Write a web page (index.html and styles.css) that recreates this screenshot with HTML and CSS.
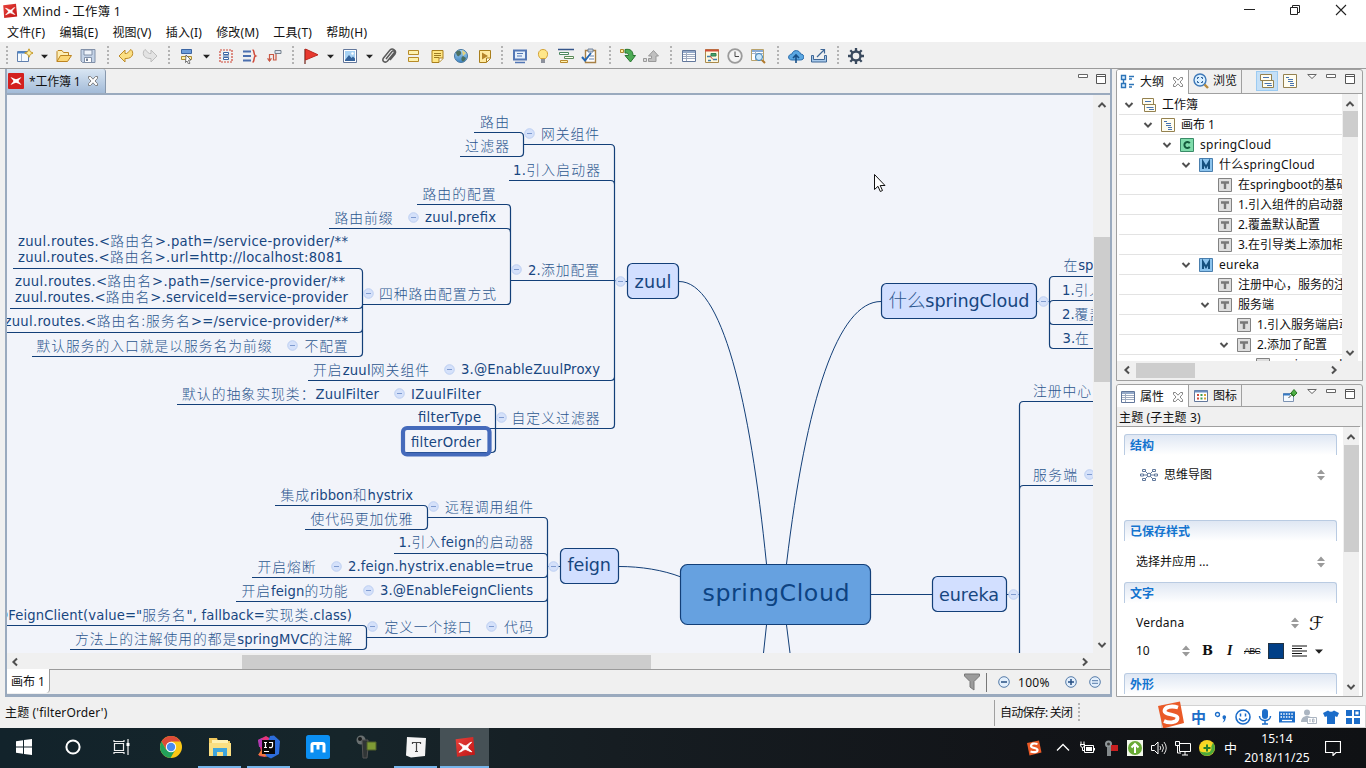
FILE: index.html
```html
<!DOCTYPE html>
<html lang="zh-CN">
<head>
<meta charset="utf-8">
<title>XMind - 工作簿 1</title>
<link rel="stylesheet" href="styles.css">
</head>
<body>
<svg class="defs" width="0" height="0">
  <defs>
    <linearGradient id="red" x1="0" y1="0" x2="1" y2="1"><stop offset="0" stop-color="#e8423c"/><stop offset="1" stop-color="#c01413"/></linearGradient>
    <linearGradient id="blue" x1="0" y1="0" x2="0" y2="1"><stop offset="0" stop-color="#a9d6f5"/><stop offset="1" stop-color="#3f86c4"/></linearGradient>
    <symbol id="xmind" viewBox="0 0 16 16"><path d="M1.200 2.300 14 .8l1.200 12.800-13 1.500z" fill="url(#red)"/><path d="M3.500 5.200c2 .2 2.800 1.500 4.800 1.900 1.700-.2 2.500-2.300 4.500-2.600-1 1.500-2.500 2.300-2.800 3.700.5 1.400 2 2 3 3.300-2-.1-3-1.500-4.900-1.700-1.600.3-2.500 1.700-4.400 2 1-1.500 2.400-2 2.700-3.300-.4-1.400-1.900-2-2.900-3.300z" fill="#fff" stroke="#fff" stroke-width=".6"/></symbol>
    <symbol id="xsq" viewBox="0 0 16 16"><rect width="16" height="16" rx="1" fill="#d3201f"/><path d="M2.500 4.200c2 .2 3.500 1.600 5.500 2 2-.4 3.500-1.800 5.500-2-1 1.700-2.600 2.400-2.900 3.800.3 1.400 1.900 2.100 2.900 3.800-2-.2-3.500-1.600-5.500-2-2 .4-3.500 1.800-5.500 2 1-1.700 2.600-2.400 2.900-3.800-.3-1.400-1.900-2.100-2.900-3.800z" fill="#fff"/></symbol>
    <symbol id="close" viewBox="0 0 12 12"><path d="M1.500 1.500h2L6 4.200l2.500-2.700h2v1.800L8 6l2.500 2.700v1.800h-2L6 7.800l-2.500 2.700h-2V8.700L4 6 1.500 3.300z" fill="#fff" stroke="#777" stroke-width=".9"/></symbol>
    <symbol id="min" viewBox="0 0 10 12"><path d="M.5 1.500h9v3h-9z" fill="#fff" stroke="#666"/></symbol>
    <symbol id="max" viewBox="0 0 10 12"><path d="M.5 1.500h9v9h-9zM.5 3.500h9" fill="#fff" stroke="#555"/></symbol>
    <symbol id="menu" viewBox="0 0 10 12"><path d="M.7 1.500h8.600L5 5.500z" fill="#fff" stroke="#666"/></symbol>
    <symbol id="up" viewBox="0 0 10 10"><path d="M1.500 7 5 3.400 8.500 7" fill="none" stroke="#505050" stroke-width="2"/></symbol>
    <symbol id="down" viewBox="0 0 10 10"><path d="M1.500 3 5 6.600 8.500 3" fill="none" stroke="#505050" stroke-width="2"/></symbol>
    <symbol id="left" viewBox="0 0 10 10"><path d="M7 1.500 3.400 5 7 8.500" fill="none" stroke="#505050" stroke-width="2"/></symbol>
    <symbol id="right" viewBox="0 0 10 10"><path d="M3 1.500 6.600 5 3 8.500" fill="none" stroke="#505050" stroke-width="2"/></symbol>
    <symbol id="spin" viewBox="0 0 8 12"><path d="M0 5 4 .5 8 5zM0 7l4 4.500L8 7z" fill="#9a9a9a"/></symbol>
    <symbol id="caret" viewBox="0 0 8 5"><path d="M0 .5h8L4 4.700z" fill="#222"/></symbol>
    <symbol id="book" viewBox="0 0 16 16"><path d="M1.500 1.500h11v6h-11zM3.500 7.500h11v7h-11z" fill="#fffdf0" stroke="#94814f"/><path d="M4 4.500h6M5.500 10.500h7M8 12.500h5" stroke="#4773b0"/></symbol>
    <symbol id="sheet" viewBox="0 0 16 16"><path d="M1.500 1.500h13v13h-13z" fill="#fffdf0" stroke="#94814f"/><path d="M4 4.500h3M6 6.500h5M6 8.500h5M8 10.500h4M8 12.500h4" stroke="#4773b0"/></symbol>
    <symbol id="tc" viewBox="0 0 14 14"><path d="M.5.5h13v13H.5z" fill="#7fdcab" stroke="#3a8b68"/><path d="M9.800 5.200A3 3 0 1 0 9.800 8.800" fill="none" stroke="#145c3d" stroke-width="2"/></symbol>
    <symbol id="tm" viewBox="0 0 14 14"><path d="M.5.5h13v13H.5z" fill="#8cc4ee" stroke="#4a7fae"/><path d="M4 11V4l3 5 3-5v7" fill="none" stroke="#15507e" stroke-width="2"/></symbol>
    <symbol id="tt" viewBox="0 0 14 14"><path d="M.5.5h13v13H.5z" fill="#dedede" stroke="#828282"/><path d="M3 4.500h8M7 4v7" fill="none" stroke="#777" stroke-width="2.400"/></symbol>
    <symbol id="tog" viewBox="0 0 12 12"><circle cx="6" cy="6" r="4.800" fill="#d5e1fa" stroke="#b5c9f0" stroke-width=".8"/><path d="M3.500 6h5" stroke="#7f9bd0"/></symbol>
    <symbol id="table" viewBox="0 0 16 16"><path d="M1.500 2.500h13v11h-13z" fill="#fff" stroke="#62779b"/><path d="M2 4h12" stroke="#93a9c9" stroke-width="2"/><path d="M2 6.500h12M2 8.500h12M2 10.500h12M5.500 3v10" stroke="#9fabc0"/></symbol>
  </defs>
</svg>

<header class="titlebar">
  <svg class="appicon" width="16" height="16"><use href="#xmind"/></svg>
  <span class="apptitle">XMind - 工作簿 1</span>
  <div class="wincontrols">
    <svg width="12" height="12"><path d="M1 5.500h11" stroke="#222"/></svg>
    <svg width="12" height="12"><path d="M3.500 3V1.500h7v7H9M1.500 3.500h7v7h-7z" fill="none" stroke="#222"/></svg>
    <svg width="12" height="12"><path d="m1 1 10 10M11 1 1 11" stroke="#222" stroke-width="1.100"/></svg>
  </div>
</header>
<nav class="menubar"><span>文件(F)</span><span>编辑(E)</span><span>视图(V)</span><span>插入(I)</span><span>修改(M)</span><span>工具(T)</span><span>帮助(H)</span></nav>

<div class="toolbar">
  <div class="tg w101"><i class="grip"></i>
    <svg width="16" height="16"><path d="M.5 3.500h11v10H.5z" fill="#f6fbff" stroke="#5f7fae"/><path d="M1 4.500h9" stroke="#4b86c8" stroke-width="2"/><path d="M4.500 6v7" stroke="#9fb4ce"/><path d="m12 .8 1.300 3 3 1.200-3 1.300-1.300 3-1.300-3-3-1.300 3-1.200z" fill="#fff3a8" stroke="#c59a2c"/></svg>
    <svg class="car" width="8" height="5"><use href="#caret"/></svg>
    <svg width="16" height="16"><path d="M1 13.500V3.500l1-1h4l1.500 2h5v3" fill="#fdeeb5" stroke="#bd8420"/><path d="m1 13.500 3.500-6h11l-4 6z" fill="#fbd777" stroke="#bd8420"/></svg>
    <svg width="16" height="16"><path d="M1 1.500h14v13H2.500L1 13z" fill="#c4d3e7" stroke="#8190a8"/><path d="M4 2h8v5H4z" fill="#eef3fa" stroke="#8190a8"/><path d="M4.500 14V9.500h7V14" fill="#fff" stroke="#8190a8"/><path d="M6 10.500h2V13H6z" fill="#76849b"/></svg>
  </div>
  <div class="tg w61"><i class="grip"></i>
    <svg width="16" height="16"><path d="M1 8 7 2v3.500h1.500C10.500 5 11 2.500 13 1.500c3 2.500 2.500 9-5 9H7V14z" fill="#fbdf84" stroke="#bd8b28"/></svg>
    <svg width="16" height="16"><path d="M15 8 9 2v3.500H7.500C5.500 5 5 2.500 3 1.500c-3 2.500-2.500 9 5 9h1V14z" fill="#e3e3e3" stroke="#bdbdbd"/></svg>
  </div>
  <div class="tg w124"><i class="grip"></i>
    <svg width="16" height="16"><path d="M2.500 1.500h10v4h-10z" fill="#6d9dd9" stroke="#3b65a3"/><path d="M2.500 8.500h10v3h-10z" fill="#fff0a6" stroke="#ad8c35"/><path d="m7 7 5 5-2.500.2 1.500 3-1.500.8-1.500-3L6.500 14.500z" fill="#fff" stroke="#555" stroke-width=".8"/></svg>
    <svg class="car" width="8" height="5"><use href="#caret"/></svg>
    <svg width="16" height="16"><path d="M2 2h12v12H2z" fill="none" stroke="#cf4a3a" stroke-dasharray="2 1" stroke-width="1.200"/><path d="M5.500 4.500h5v2h-5zM5.500 9.500h5v2h-5z" fill="#fff" stroke="#3b65a3"/><path d="M5 8h6" stroke="#3b65a3"/></svg>
    <svg width="16" height="16"><path d="M1 3.500h8M1 8h8M1 12.500h8" stroke="#4b6fae" stroke-width="2"/><path d="M10.500 2c2.500 0 .5 5 3 6-2.500 1-.5 6-3 6" fill="none" stroke="#cf4a3a" stroke-width="1.500"/></svg>
    <svg width="16" height="16"><path d="M3.500 13V6.500h4V12h2.500V4" fill="none" stroke="#c95844" stroke-width="1.200"/><path d="m1.500 10.500 2 3 2-3" fill="#c95844" stroke="#c95844"/><path d="M9 2.500h6v3H9z" fill="#dbe3ee" stroke="#75808d"/></svg>
  </div>
  <div class="tg w209"><i class="grip"></i>
    <svg width="16" height="16"><path d="M2 1v15" stroke="#8a4a42" stroke-width="1.500"/><path d="M2.500 1 15 6.800 2.500 12z" fill="#e8392f" stroke="#bb2820"/></svg>
    <svg class="car" width="8" height="5"><use href="#caret"/></svg>
    <svg width="16" height="16"><path d="M1.500 1.500h13v13h-13z" fill="#fff" stroke="#62779b"/><path d="M3 3h10v10H3z" fill="#a7d2f4"/><path d="m3 12 4-5 2.500 3L11 8.500l2 2V13H3z" fill="#34639b"/><circle cx="10.500" cy="5.500" r="1.200" fill="#fff"/></svg>
    <svg class="car" width="8" height="5"><use href="#caret"/></svg>
    <svg width="16" height="16"><path d="m5 11 6-7.500c1.500-1.500 3 0 2 1.500L6.500 13C4 15.500.5 13 2.500 10L9 2c2.500-2.500 7 .5 5 4L9 12" fill="none" stroke="#5a5a5a" stroke-width="1.500"/></svg>
    <svg width="16" height="16"><path d="M3.500 2.500h10v4h-10zM3.500 9.500h10v4h-10z" fill="#fff2ae" stroke="#b78b28"/></svg>
    <svg width="16" height="16"><path d="M3 2.500h11v8l-4 4H3z" fill="#ffe683" stroke="#a97f1d"/><path d="M5 5.500h7M5 7.500h7M5 9.500h5" stroke="#9c7a24"/><path d="M10 14v-4h4" fill="#fff" stroke="#a97f1d"/></svg>
    <svg width="16" height="16"><circle cx="8" cy="8" r="6.500" fill="url(#blue)" stroke="#4676a0"/><path d="M3 4c2-2 4-2 5 0s-1 3-2 4-3-1-3-4zm7 4 3 2c-1 3-3 4-4 3s-1-4 1-5z" fill="#4b6f60"/><path d="m9 2 4 3-3 3z" fill="#e5d27c"/></svg>
    <svg width="16" height="16"><path d="M2.500 2.500h11v8l-4 4h-7z" fill="#ffe9a0" stroke="#a97f1d"/><path d="m5 4.500 6 3.500-6 3.500z" fill="#b5842a"/><path d="M9.500 14v-4H13" fill="#fff" stroke="#a97f1d"/></svg>
  </div>
  <div class="tg s7 w108"><i class="grip"></i>
    <svg width="16" height="16"><path d="M2 2.500h12v9H2z" fill="#e6f0fb" stroke="#5377b5" stroke-width="2"/><path d="M5 5.500h6M5 8h5" stroke="#5377b5"/><path d="M3 14.500h10" stroke="#5377b5" stroke-width="1.500"/></svg>
    <svg width="16" height="16"><path d="M5.500 10.500C2 7.500 3 1.500 8 1.500s6 6 2.500 9z" fill="#ffe789" stroke="#d3a235"/><path d="M6 12h4M6 14h4" stroke="#6b7280" stroke-width="1.500"/></svg>
    <svg width="16" height="16"><path d="M0 1.500h16" stroke="#35558a" stroke-width="1.500"/><path d="M1.500 4.500h9v2h-9z" fill="#fff" stroke="#4b8760"/><path d="M6.500 8.500h9v2h-9z" fill="#ffe" stroke="#5a8a5a"/><path d="M2.500 12.500h7v2h-7z" fill="#fff3b0" stroke="#b9892c"/></svg>
    <svg width="16" height="16"><path d="M4.500 2.500h10v12h-10z" fill="#fff" stroke="#a78045" stroke-width="1.400"/><path d="M7 1h5v3H7z" fill="#c7d2df" stroke="#72839b"/><path d="M9 8h4M8 11h5" stroke="#6381ae"/><path d="m1 9 3 3.500L10 5" fill="none" stroke="#2667b0" stroke-width="2"/></svg>
  </div>
  <div class="tg s7 w61"><i class="grip"></i>
    <svg width="16" height="16"><path d="M.5 1.500h3v3h-3z" fill="#fff0a6" stroke="#ae862b"/><path d="M5 1.500c6-1 8 2 8 6h2.500L10.500 14 5 7.500h3.500c0-2-.5-2.500-3.500-2.500z" fill="#4dac55" stroke="#28752f"/></svg>
    <svg width="16" height="16"><path d="M.5 10.500h3v3h-3z" fill="#ddd" stroke="#999"/><path d="M5.500 13.500H13V8h2.500l-5-5.500L5.500 8h3v2.500h-3z" fill="#c0c0c0" stroke="#999"/></svg>
  </div>
  <div class="tg s7 w107"><i class="grip"></i>
    <svg width="16" height="16"><use href="#table"/></svg>
    <svg width="16" height="16"><path d="M1.500 1.500h13v13h-13z" fill="#fff8df" stroke="#a98a4c"/><path d="M1 2.500h14" stroke="#cf4e38" stroke-width="2"/><path d="M7 5.500h5v2.500H7z" fill="#47a06a" stroke="#2f7f50"/><path d="M3 8.500h4M9 11.500h4M4 12.500h3" stroke="#3d7cad" stroke-width="1.300"/><path d="m6 8 3 3.500" stroke="#cf4e38"/></svg>
    <svg width="16" height="16"><circle cx="8" cy="8" r="6.800" fill="#f4f4f4" stroke="#9b9b9b" stroke-width="1.800"/><path d="M8 3.500v5h4" fill="none" stroke="#484848"/></svg>
    <svg width="16" height="16"><path d="M1.500 1.500h12v11h-12z" fill="#fff" stroke="#b9a36c"/><path d="M2 3h11" stroke="#87aad5" stroke-width="2"/><path d="M2 5.500h11M5.500 3v9" stroke="#9fb4ce"/><circle cx="9" cy="9" r="3.500" fill="#cae7fb" stroke="#3b7fb5"/><path d="m12 12 3 3" stroke="#b07a2d" stroke-width="2"/></svg>
  </div>
  <div class="tg s7 w60"><i class="grip"></i>
    <svg width="16" height="16"><path d="M4 12C-1 12 0 6 4 6c1-5 8-4 8.500 0 4.500 0 4.500 6 0 6z" fill="#5aa7e2" stroke="#2a6cab"/><path d="M8 15V7M5 10l3-3 3 3" fill="none" stroke="#174f87" stroke-width="1.600"/></svg>
    <svg width="16" height="16"><path d="M.5 7.500v6.500h15V7.500h-2v4h-11v-4z" fill="#a8c9ea" stroke="#3f6796"/><path d="m6 9 7-7M9.500 1.500h4v4" fill="none" stroke="#3f6796" stroke-width="1.200"/></svg>
  </div>
  <div class="tg"><i class="grip"></i>
    <svg width="16" height="16"><circle cx="8" cy="8" r="4.500" fill="none" stroke="#3a4a5e" stroke-width="2.400"/><path d="M8 0v3M8 13v3M0 8h3M13 8h3M2.300 2.300l2.200 2.200M11.500 11.500l2.200 2.200M13.700 2.300l-2.200 2.200M4.500 11.500l-2.200 2.200" stroke="#3a4a5e" stroke-width="2.300"/></svg>
  </div>
</div>

<main class="workbench">
  <section class="editor">
    <div class="edtabs">
      <div class="edtab"><svg width="16" height="16"><use href="#xsq"/></svg><span>*工作簿 1</span><svg width="12" height="12"><use href="#close"/></svg></div>
      <div class="viewbtns"><svg width="10" height="12"><use href="#min"/></svg><svg width="10" height="12"><use href="#max"/></svg></div>
    </div>
    <div class="edbody">
      <div class="canvasrow">
        <svg class="map" width="1086" height="558" viewBox="7 95 1086 558">
          <g class="thin">
            <path d="M679 281.500C722 281.500 750 400 766.500 564M881 301.500C838 301.500 806 400 786.500 564M619 566.500C641 566.500 663 570 681 577M766.500 625 763.500 653M786.500 625 790 653M871 594.500H932"/>
          </g>
          <g class="line">
            <path d="M474 132.500h45.500q4 0 4 4v16q0 4-4 4H460M523.500 144.500h87q4 0 4 4v276q0 4-4 4H495.500M509 180.500h101.500q4 0 4 4M510.500 280.500H615l6 1h6M308 380.500H610.500q4 0 4-4"/>
            <path d="M417 204.500h89.500q4 0 4 4v92q0 4-4 4H362.500M329 228.500h177.500q4 0 4 4"/>
            <path d="M13 268.500h345.500q4 0 4 4v80q0 4-4 4H32M10 308.500h348.500q4 0 4-4M7 332.500h351.500q4 0 4-4"/>
            <path d="M177 404.500h314.500q4 0 4 4v40q0 4-4 4H405M413 428.500H496"/>
            <path d="M275 505.500h148.500q4 0 4 4v16q0 4-4 4H305M427.500 517.500h116q4 0 4 4v112q0 4-4 4H366.500M394 553.500h149.500q4 0 4 4M252 577.500h291.500q4 0 4-4M236 601.500h307.500q4 0 4-4M547.500 566.500H560"/>
            <path d="M7 625.500h355.500q4 0 4 4v16q0 4-4 4H70"/>
            <path d="M1093 276.500h-39.500q-4 0-4 4v64q0 4 4 4H1093M1093 300.500h-39.500q-4 0-4 4M1093 324.500h-39.500q-4 0-4-4M1037 301.500h12.500M1093 401.500h-69.500q-4 0-4 4V653M1093 485.500h-69.500q-4 0-4 4M1007 594.500h12.500"/>
          </g>
          <g class="box">
            <rect x="627.500" y="263.500" width="51" height="35" rx="5"/>
            <rect x="560.500" y="548.500" width="58" height="35" rx="5"/>
            <rect x="881.500" y="283.500" width="155" height="35" rx="5"/>
            <rect x="932.500" y="576.500" width="74" height="35" rx="5"/>
            <rect class="root" x="680.500" y="564.500" width="190" height="60" rx="7"/>
          </g>
          <rect class="selected" x="403" y="428" width="86.500" height="26.500" rx="4"/>
          <g>
            <use href="#tog" x="523.500" y="127.500" width="12" height="12"/><use href="#tog" x="407.500" y="211.500" width="12" height="12"/>
            <use href="#tog" x="510.500" y="263.500" width="12" height="12"/><use href="#tog" x="362.500" y="287.500" width="12" height="12"/>
            <use href="#tog" x="286.500" y="339.500" width="12" height="12"/><use href="#tog" x="614.500" y="275.500" width="12" height="12"/>
            <use href="#tog" x="443.500" y="363.500" width="12" height="12"/><use href="#tog" x="393.500" y="387.500" width="12" height="12"/>
            <use href="#tog" x="495.500" y="411.500" width="12" height="12"/><use href="#tog" x="427.500" y="500.500" width="12" height="12"/>
            <use href="#tog" x="330.500" y="560.500" width="12" height="12"/><use href="#tog" x="362.500" y="584.500" width="12" height="12"/>
            <use href="#tog" x="366.500" y="620.500" width="12" height="12"/><use href="#tog" x="485.500" y="620.500" width="12" height="12"/>
            <use href="#tog" x="547.500" y="560.500" width="12" height="12"/><use href="#tog" x="1037.500" y="295.500" width="12" height="12"/>
            <use href="#tog" x="1007.500" y="588.500" width="12" height="12"/><use href="#tog" x="1083.500" y="468.500" width="12" height="12"/>
          </g>
          <g class="topic">
            <text class="c" x="480" y="127" textLength="30">路由</text>
            <text class="c" x="465" y="151" textLength="45">过滤器</text>
            <text class="c" x="541" y="139" textLength="59">网关组件</text>
            <text x="513" y="175" textLength="88">1.<tspan class="c">引入启动器</tspan></text>
            <text class="c" x="422.500" y="199" textLength="74">路由的配置</text>
            <text class="c" x="334.500" y="223" textLength="59">路由前缀</text>
            <text x="425" y="221.500" textLength="71">zuul.prefix</text>
            <text x="18" y="246" textLength="330">zuul.routes.&lt;<tspan class="c">路由名</tspan>&gt;.path=/service-provider/**</text>
            <text x="18" y="262" textLength="325">zuul.routes.&lt;<tspan class="c">路由名</tspan>&gt;.url=http://localhost:8081</text>
            <text x="15" y="286" textLength="330">zuul.routes.&lt;<tspan class="c">路由名</tspan>&gt;.path=/service-provider/**</text>
            <text x="15" y="302" textLength="333">zuul.routes.&lt;<tspan class="c">路由名</tspan>&gt;.serviceId=service-provider</text>
            <text x="4.500" y="326" textLength="343.500">zuul.routes.&lt;<tspan class="c">路由名:服务名</tspan>&gt;=/service-provider/**</text>
            <text class="c" x="36.500" y="351" textLength="236">默认服务的入口就是以服务名为前缀</text>
            <text class="c" x="304.500" y="351" textLength="44">不配置</text>
            <text class="c" x="379" y="299" textLength="118">四种路由配置方式</text>
            <text x="528" y="275" textLength="72">2.<tspan class="c">添加配置</tspan></text>
            <text x="313" y="374.500" textLength="117"><tspan class="c">开启</tspan>zuul<tspan class="c">网关组件</tspan></text>
            <text x="461" y="373.500" textLength="139">3.@EnableZuulProxy</text>
            <text x="182" y="399" textLength="197"><tspan class="c">默认的抽象实现类：</tspan>ZuulFilter</text>
            <text x="411" y="398.500" textLength="70">IZuulFilter</text>
            <text x="418" y="421.500" textLength="63">filterType</text>
            <text class="c" x="511.500" y="423" textLength="89">自定义过滤器</text>
            <text x="411" y="446.500" textLength="70">filterOrder</text>
            <text x="280.500" y="499.500" textLength="132.500"><tspan class="c">集成</tspan>ribbon<tspan class="c">和</tspan>hystrix</text>
            <text class="c" x="310.500" y="524" textLength="103">使代码更加优雅</text>
            <text class="c" x="445" y="512" textLength="89">远程调用组件</text>
            <text x="398.500" y="547" textLength="135.500">1.<tspan class="c">引入</tspan>feign<tspan class="c">的启动器</tspan></text>
            <text class="c" x="257.500" y="572" textLength="59">开启熔断</text>
            <text x="348" y="570.500" textLength="185">2.feign.hystrix.enable=true</text>
            <text x="241.500" y="595.500" textLength="107"><tspan class="c">开启</tspan>feign<tspan class="c">的功能</tspan></text>
            <text x="380" y="594.500" textLength="153">3.@EnableFeignClients</text>
            <text x="-5" y="619.500" textLength="357">@FeignClient(value="<tspan class="c">服务名</tspan>", fallback=<tspan class="c">实现类</tspan>.class)</text>
            <text class="c" x="384.500" y="632" textLength="88">定义一个接口</text>
            <text class="c" x="504" y="632" textLength="30">代码</text>
            <text x="75" y="643.500" textLength="278"><tspan class="c">方法上的注解使用的都是</tspan>springMVC<tspan class="c">的注解</tspan></text>
            <text x="1063.500" y="270"><tspan class="c">在</tspan>springboot</text>
            <text x="1062" y="295">1.<tspan class="c">引入</tspan></text>
            <text x="1062" y="319">2.<tspan class="c">覆盖</tspan></text>
            <text x="1062.500" y="343">3.<tspan class="c">在</tspan></text>
            <text class="c" x="1033" y="396" textLength="59">注册中心</text>
            <text class="c" x="1033" y="480" textLength="45">服务端</text>
          </g>
          <g class="topic main">
            <text x="634.500" y="288" textLength="37">zuul</text>
            <text x="567.500" y="571" textLength="43.500">feign</text>
            <text x="888.500" y="307" textLength="141"><tspan class="c2">什么</tspan>springCloud</text>
            <text x="939" y="601" textLength="60">eureka</text>
            <text class="rt" x="702.500" y="601" textLength="147">springCloud</text>
          </g>
          <path class="cursor" d="M874.500 174.500v15l3.500-3.200 2.300 5.200 2.200-1-2.300-5h4.800z"/>
        </svg>
        <div class="vbar edv"><svg width="10" height="10"><use href="#up"/></svg><i></i><svg width="10" height="10"><use href="#down"/></svg></div>
      </div>
      <div class="hbar edh"><svg width="10" height="10"><use href="#left"/></svg><i></i><svg width="10" height="10"><use href="#right"/></svg></div>
      <div class="sheets">
        <span class="sheettab">画布 1</span>
        <div class="zoom">
          <svg width="16" height="18"><path d="M.5 1h15v2l-5.500 5.500V17L6 14V8.500L.5 3z" fill="#9b9b9b" stroke="#777"/></svg>
          <i></i>
          <svg width="12" height="12"><circle cx="6" cy="6" r="5.300" fill="#e3effc" stroke="#557ba8"/><path d="M3 6h6" stroke="#264f82" stroke-width="1.500"/></svg>
          <span>100%</span>
          <svg width="12" height="12"><circle cx="6" cy="6" r="5.300" fill="#e3effc" stroke="#557ba8"/><path d="M3 6h6M6 3v6" stroke="#264f82" stroke-width="1.500"/></svg>
          <svg width="12" height="12"><circle cx="6" cy="6" r="5.300" fill="#e3effc" stroke="#557ba8"/><path d="M3 4.700h6M3 7.300h6" stroke="#557ba8"/></svg>
        </div>
      </div>
    </div>
  </section>

  <aside class="side">
    <section class="panel outline">
      <div class="ptabs">
        <div class="ptab on"><svg width="16" height="16"><path d="M1.500 1.500h4v4h-4zM1.500 9.500h4v4h-4zM9 2.500h5M9 5h3M9 10.500h5M9 13h3M3.500 5.500v4" fill="#d8edff" stroke="#2c74b8" stroke-width="1.400"/></svg><span>大纲</span><svg width="12" height="12"><use href="#close"/></svg></div>
        <div class="ptab"><svg width="16" height="16"><circle cx="7" cy="7" r="6" fill="#d9efff" stroke="#3f79b8" stroke-width="1.400"/><path d="M4.500 6V4.500H6M8 4.500h1.500V6M9.500 8v1.500H8M6 9.500H4.500V8" fill="none" stroke="#2c5f9a"/><path d="m11.500 11.500 3.500 3.500" stroke="#b78a3c" stroke-width="2.400"/></svg><span>浏览</span></div>
        <div class="ptools"><b class="hot"><svg width="16" height="16"><use href="#book"/></svg></b><svg class="sh" width="16" height="16"><use href="#sheet"/></svg><svg width="10" height="12"><use href="#menu"/></svg><svg width="10" height="12"><use href="#min"/></svg><svg width="10" height="12"><use href="#max"/></svg></div>
      </div>
      <div class="olbody">
        <div class="tree">
          <div class="row"><svg class="ex" width="10" height="10"><use href="#down"/></svg><svg width="16" height="16"><use href="#book"/></svg><span>工作簿</span></div>
          <div class="row l1"><svg class="ex" width="10" height="10"><use href="#down"/></svg><svg width="16" height="16"><use href="#sheet"/></svg><span>画布 1</span></div>
          <div class="row l2"><svg class="ex" width="10" height="10"><use href="#down"/></svg><svg class="t" width="14" height="14"><use href="#tc"/></svg><span class="wide">springCloud</span></div>
          <div class="row l3"><svg class="ex" width="10" height="10"><use href="#down"/></svg><svg class="t" width="14" height="14"><use href="#tm"/></svg><span class="wide">什么springCloud</span></div>
          <div class="row l4"><i class="ex"></i><svg class="t" width="14" height="14"><use href="#tt"/></svg><span>在springboot的基础上</span></div>
          <div class="row l4"><i class="ex"></i><svg class="t" width="14" height="14"><use href="#tt"/></svg><span>1.引入组件的启动器</span></div>
          <div class="row l4"><i class="ex"></i><svg class="t" width="14" height="14"><use href="#tt"/></svg><span>2.覆盖默认配置</span></div>
          <div class="row l4"><i class="ex"></i><svg class="t" width="14" height="14"><use href="#tt"/></svg><span>3.在引导类上添加相应</span></div>
          <div class="row l3"><svg class="ex" width="10" height="10"><use href="#down"/></svg><svg class="t" width="14" height="14"><use href="#tm"/></svg><span class="wide">eureka</span></div>
          <div class="row l4"><i class="ex"></i><svg class="t" width="14" height="14"><use href="#tt"/></svg><span>注册中心，服务的注册</span></div>
          <div class="row l4"><svg class="ex" width="10" height="10"><use href="#down"/></svg><svg class="t" width="14" height="14"><use href="#tt"/></svg><span>服务端</span></div>
          <div class="row l5"><i class="ex"></i><svg class="t" width="14" height="14"><use href="#tt"/></svg><span>1.引入服务端启动器</span></div>
          <div class="row l5"><svg class="ex" width="10" height="10"><use href="#down"/></svg><svg class="t" width="14" height="14"><use href="#tt"/></svg><span>2.添加了配置</span></div>
          <div class="row l6"><i class="ex"></i><svg class="t" width="14" height="14"><use href="#tt"/></svg><span class="wide">spring.appli</span></div>
        </div>
        <div class="vbar olv"><svg width="10" height="10"><use href="#up"/></svg><i></i><svg width="10" height="10"><use href="#down"/></svg></div>
      </div>
      <div class="hbar olh"><svg width="10" height="10"><use href="#left"/></svg><i></i><svg width="10" height="10"><use href="#right"/></svg></div>
    </section>

    <section class="panel props">
      <div class="ptabs">
        <div class="ptab on"><svg width="16" height="16"><use href="#table"/></svg><span>属性</span><svg width="12" height="12"><use href="#close"/></svg></div>
        <div class="ptab"><svg width="16" height="16"><path d="M1.500 2.500h13v11h-13z" fill="#fff" stroke="#62779b"/><path d="M1.500 3.500h13" stroke="#6d8fc0" stroke-width="2"/><path d="M4 7h2M4 10.500h2" stroke="#cf4a3a" stroke-width="2"/><path d="M7.500 7h2M7.500 10.500h2" stroke="#3f9d52" stroke-width="2"/><path d="M11 7h2M11 10.500h2" stroke="#d8a433" stroke-width="2"/></svg><span>图标</span></div>
        <div class="ptools"><svg class="pin" width="16" height="16"><path d="M1.500 5.500h10v8h-10z" fill="#f5faff" stroke="#7d93b3"/><path d="M1 6.500h7" stroke="#367ac3" stroke-width="2"/><path d="m6.500 10 3.500-3.500" stroke="#444"/><path d="m8 5 4 4M9 5l3-3.500L15 5l-3 3z" fill="#4fae45" stroke="#2b7927"/></svg><svg width="10" height="12"><use href="#menu"/></svg><svg width="10" height="12"><use href="#min"/></svg><svg width="10" height="12"><use href="#max"/></svg></div>
      </div>
      <div class="ptitle">主题 (子主题 3)</div>
      <div class="pbody">
        <div class="form">
          <h3>结构</h3>
          <div class="frow r1"><svg width="18" height="14"><path d="m5 3 4 4 4-4M5 11l4-4 4 4M4 7h10" fill="none" stroke="#60789c"/><path d="M2.500 1.500h3v2h-3zM.5 6h3v2h-3zM2.500 10.500h3v2h-3zM12.500 1.500h3v2h-3zM14.500 6h3v2h-3zM12.500 10.500h3v2h-3z" fill="#fff" stroke="#60789c"/><circle cx="9" cy="7" r="1.800" fill="#fff" stroke="#60789c"/></svg><span>思维导图</span><svg class="sp" width="8" height="12"><use href="#spin"/></svg></div>
          <h3>已保存样式</h3>
          <div class="frow r2"><span>选择并应用 ...</span><svg class="sp" width="8" height="12"><use href="#spin"/></svg></div>
          <h3>文字</h3>
          <div class="frow r3"><span class="wide">Verdana</span><svg class="sp" width="8" height="12"><use href="#spin"/></svg><em class="script">ℱ</em></div>
          <div class="frow r4"><span class="size">10</span><svg width="8" height="12"><use href="#spin"/></svg><b class="fb">B</b><em class="fi">I</em><s class="fs">ABC</s><i class="swatch"></i><svg class="al" width="15" height="12"><path d="M0 1h15M0 3.500h10M0 6h15M0 8.500h10M0 11h15" stroke="#111" stroke-width="1.200"/></svg><svg width="8" height="5"><use href="#caret"/></svg></div>
          <h3>外形</h3>
        </div>
        <div class="vbar prv"><svg width="10" height="10"><use href="#up"/></svg><i></i><svg width="10" height="10"><use href="#down"/></svg></div>
      </div>
    </section>
  </aside>
</main>

<footer class="status">
  <span class="sttext">主题 ('filterOrder')</span>
  <span class="autosave">自动保存: 关闭</span>
  <i class="grip"></i>
  <div class="ime">
    <svg class="sogou" width="28" height="28"><path d="m1 5 22-4.500 4 21.500-21 5.500z" fill="#ea5a27"/><path d="M21 6.500C15 4.500 7.500 5.500 7.500 10s13 2.500 13 7-8 5.500-13.500 3" fill="none" stroke="#fff" stroke-width="3.800"/></svg>
    <b>中</b>
    <svg width="16" height="16"><circle cx="4.500" cy="5.500" r="2" fill="none" stroke="#1c6dc9" stroke-width="1.300"/><path d="M9.500 8a1.800 1.800 0 1 1 3 1.500q0 3-3 4 1.500-1.500 1.500-3-1.500-.5-1.500-2.500z" fill="#1c6dc9"/></svg>
    <svg width="16" height="16"><circle cx="8" cy="8" r="7" fill="none" stroke="#1c6dc9" stroke-width="1.600"/><path d="M5.500 4.500v3M10.500 4.500v3M4 9.500q4 5 8 0" fill="none" stroke="#1c6dc9" stroke-width="1.500"/></svg>
    <svg width="16" height="16"><rect x="5" y="0" width="6" height="10" rx="3" fill="#1c6dc9"/><path d="M2.500 7c0 6 11 6 11 0M8 11v4M5 15h6" fill="none" stroke="#1c6dc9" stroke-width="1.500"/></svg>
    <svg width="16" height="16"><path d="M0 2.500h16v11H0z" fill="#1c6dc9"/><path d="M1.500 5h13M1.500 8h13" stroke="#fff" stroke-width="1.500" stroke-dasharray="1.500 1.200"/><path d="M3 11.500h10" stroke="#fff" stroke-width="1.300"/></svg>
    <svg width="16" height="16"><circle cx="6" cy="3.500" r="3" fill="#abb5c1"/><path d="M0 13c0-8 12-8 12 0z" fill="#abb5c1"/><path d="M6.500 8.500h9v6h-9z" fill="#fff" stroke="#abb5c1"/><path d="M9 10v3M11.500 10v3h1.500v-3z" fill="none" stroke="#abb5c1"/></svg>
    <svg width="16" height="16"><path d="M5 1.500q3 2.500 6 0L16 4l-1.800 4-2.200-.7V15H4V7.300L1.800 8 0 4z" fill="#1c6dc9"/></svg>
    <svg width="16" height="16"><path d="M1 1h6v6H1zM1 9h6v6H1zM9 9h6v6H9z" fill="#1c6dc9"/><path d="M9.700 1.700h4.600v4.600H9.700z" fill="none" stroke="#1c6dc9" stroke-width="1.400"/></svg>
  </div>
</footer>

<div class="taskbar">
  <div class="tb"><svg width="16" height="16"><path d="m0 2.300 7-1v6.200H0zM8 1.100 16 0v7.500H8zM0 8.500h7v6.200l-7-1zM8 8.500h8V16l-8-1.100z" fill="#fff"/></svg></div>
  <div class="tb"><svg width="16" height="16"><circle cx="8" cy="8" r="6.600" fill="none" stroke="#fff" stroke-width="2"/></svg></div>
  <div class="tb"><svg width="18" height="16"><path d="M1 1v1.500h10V1M1 15v-1.500h10V15M1.500 4.500h9v7h-9zM15 0v16" fill="none" stroke="#eee" stroke-width="1.200"/><path d="M15 4v3" stroke="#fff" stroke-width="3"/></svg></div>
  <div class="tb"><svg width="22" height="22"><circle cx="11" cy="11" r="11" fill="#fbc716"/><path d="M1.500 5.500A11 11 0 0 1 20.500 5.500H11L6.500 14z" fill="#dd4b39"/><path d="M1.500 5.500A11 11 0 0 0 10.500 22l4.800-8.300H6.200z" fill="#23a15b"/><circle cx="11" cy="11" r="5.200" fill="#fff"/><circle cx="11" cy="11" r="4.200" fill="#4b8bf0"/></svg></div>
  <div class="tb run"><svg width="22" height="20"><path d="M0 1h8l1 3h12v15H0z" fill="#f0c85c"/><path d="M3 3h16v8H3z" fill="#fff1b3"/><path d="M0 6h22v13H0z" fill="#fbdf82"/><path d="M4 19v-8h14v8h-4v-4H8v4z" fill="#3fa5dc"/></svg></div>
  <div class="tb run"><svg width="24" height="24"><path d="m1 5 8-4 5 3-6 18-6-1 2-5z" fill="#e7357c"/><path d="m13 1 4-.5 6 5.500-1 13-8 4.500-8-4z" fill="#2d6ddb"/><path d="m1 5 4-2 3 9-6 0z" fill="#b03ab4"/><path d="m1 20 4-6 5 8z" fill="#f0783d"/><path d="M5 5h13v14H5z" fill="#080808"/><path d="M7 7.500h3M8.500 7.500v5M7 12.500h3M12 7.500h3.500v3.500q0 2-3.500 1.400M7 16.500h5" fill="none" stroke="#fff" stroke-width="1.200"/></svg></div>
  <div class="tb"><svg width="24" height="24"><rect width="24" height="24" rx="2.500" fill="#0b8ff2"/><path d="M6 17.500V10q0-1.500 1.500-1.500h9Q18 8.500 18 10v7.500M12 9v5.500" fill="none" stroke="#fff" stroke-width="3"/></svg></div>
  <div class="tb"><svg width="22" height="24"><circle cx="5" cy="5" r="4.500" fill="#6a7071"/><circle cx="4" cy="4" r="2" fill="#171b1c"/><path d="M6 5h6v8l-1 10H7z" fill="#303536" stroke="#555"/><path d="M11 7h9v8h-9z" fill="#7e9a35" stroke="#4f5f2a"/></svg></div>
  <div class="tb run"><svg width="22" height="22"><path d="M2 1 21 2l-1 18-14 1.500-5-2z" fill="#f4f4f4"/><path d="M7.500 8V6.500h8V8M11.500 6.500v9M10 15.500h3" fill="none" stroke="#444" stroke-width="1.200"/></svg></div>
  <div class="tb run active"><svg width="22" height="22"><use href="#xmind"/></svg></div>
  <div class="tray">
    <svg class="a1" width="16" height="16"><path d="m1 3 12-2.500 2.500 12-12 3z" fill="#ea5a27"/><path d="M11.500 4C8 3 5 3.500 5 6s6.500 1.500 6.500 4-4 2.500-7 1.500" fill="none" stroke="#fff" stroke-width="2.200"/></svg>
    <svg width="16" height="16"><path d="m2 10.500 6-6 6 6" fill="none" stroke="#fff" stroke-width="1.300"/></svg>
    <svg width="16" height="16"><path d="M5.500 5.500h9v7h-9z" fill="none" stroke="#fff"/><path d="M7 7h6v4H7zM15 8h1v2.500h-1z" fill="#fff"/><path d="M1 4.500h5M2 1.500V4M5 1.500V4M1.500 4.500q0 3 2 3t2-3M3.500 7.500v3h2" fill="none" stroke="#fff"/></svg>
    <svg width="16" height="16"><circle cx="5.500" cy="4" r="3.500" fill="#8f9699"/><circle cx="5.500" cy="4" r="1.500" fill="#333"/><path d="M4 7h4v9H4z" fill="#83898b"/><path d="M8 5h7v6H8z" fill="#c71f20"/></svg>
    <svg width="16" height="16"><path d="M0 0h16v16H0z" fill="#f3f8ec"/><circle cx="8" cy="8" r="7" fill="#68aa35"/><path d="M8 13V4M4.500 7.500 8 4l3.500 3.500" fill="none" stroke="#fff" stroke-width="2"/></svg>
    <svg width="16" height="16"><path d="M.5 5.500h3L7 2v12l-3.500-3.500h-3z" fill="none" stroke="#fff"/><path d="M9 6q1.500 2 0 4M11 4q3 4 0 8M13 2q4.500 6 0 12" fill="none" stroke="#ddd"/></svg>
    <svg width="16" height="16"><path d="M4.500 3.500h11v8h-11zM10 12v3M7 15h6" fill="none" stroke="#fff"/><path d="M.5 1.500h4v4h-4z" fill="#1b2026" stroke="#fff"/><path d="M2.500 6v7H6" fill="none" stroke="#fff"/></svg>
    <svg width="16" height="16"><circle cx="8" cy="8" r="8" fill="#f8d423"/><path d="M14 2.700A8 8 0 1 1 .5 11Q9 16 14 2.700z" fill="#4ca93a"/><circle cx="8" cy="8" r="4.500" fill="#f3df2b"/><path d="M8 4.500v7M4.500 8h7" stroke="#267c2c" stroke-width="2"/></svg>
    <span class="zh">中</span>
    <div class="clock"><span>15:14</span><span>2018/11/25</span></div>
    <svg class="note" width="16" height="16"><path d="M.5 1.500h15v11H11l-3 3v-3H.5z" fill="none" stroke="#fff" stroke-width="1.200"/></svg>
  </div>
</div>
</body>
</html>
```
FILE: styles.css
```css
* { box-sizing: border-box; }
body {
  margin: 0;
  width: 1366px;
  height: 768px;
  overflow: hidden;
  display: flex;
  flex-direction: column;
  background: #f0f0f0;
  color: #111;
  font: 12px/16px "Noto Sans", "Noto Sans CJK SC", sans-serif;
  white-space: nowrap;
}
svg { display: block; flex: none; }
.defs { position: absolute; }

.titlebar { height: 22px; flex: none; background: #fff; display: flex; align-items: center; padding-left: 2px; }
.apptitle { margin: 1px 0 0 5px; font-size: 12.300px; letter-spacing: .3px; }
.wincontrols { margin-left: auto; display: flex; gap: 34px; padding: 0 19px 2px 0; }
.menubar { height: 20px; flex: none; background: #fff; display: flex; gap: 14.200px; padding-left: 7px; line-height: 21px; }
.menubar span { letter-spacing: .17px; }

.toolbar { height: 27px; flex: none; display: flex; padding-left: 6px; border-bottom: 1px solid #9b9b9b; background: #f0f0f0; }
.tg { display: flex; gap: 8px; align-items: center; flex: none; padding-top: 2px; }
.tg.s7 { gap: 7px; }
.s7 .grip { margin-right: 2px; }
.grip { width: 2px; height: 20px; margin-right: 1px; background: repeating-linear-gradient(#b3b3b3 0 2px, transparent 2px 4px); }
.car { width: 7px; }
.w101 { width: 101px; } .w61 { width: 61px; } .w124 { width: 124px; } .w209 { width: 209px; }
.w108 { width: 108px; } .w107 { width: 107px; } .w60 { width: 60px; }

.workbench { height: 628px; flex: none; display: flex; padding: 0 3px 0 5px; }
.editor { width: 1107px; flex: none; border: solid #9aaabe; border-width: 0 2px 3px 2px; display: flex; flex-direction: column; }
.edtabs { height: 26px; flex: none; display: flex; justify-content: space-between; border-bottom: 2px solid #9aaabe; }
.edtab { width: 99px; display: flex; align-items: center; gap: 5px; padding-left: 1px; background: linear-gradient(#d9e6f3, #a3bbd8); border-right: 1px solid #8798ad; border-radius: 0 3px 0 0; }
.edtab span { width: 53px; letter-spacing: -.2px; padding-top: 1px; }
.viewbtns { display: flex; gap: 8px; padding: 4px 4px 0 0; }
.edbody { flex: 1; display: flex; flex-direction: column; }
.canvasrow { display: flex; height: 558px; }
.map { background: #f2f4fa; overflow: hidden; }
.vbar { display: flex; flex-direction: column; align-items: center; background: #f0f0f0; }
.vbar i, .hbar i { background: #cdcdcd; flex: none; }
.vbar svg:last-child { margin-top: auto; }
.hbar { display: flex; align-items: center; background: #f0f0f0; }
.hbar svg:last-child { margin-left: auto; }
.edv { flex: 1; padding: 5px 0 3px; }
.edv i { width: 16px; height: 145px; margin-top: 127px; }
.edh { height: 16px; padding: 1px 20px 0 3px; }
.edh i { width: 409px; height: 14px; margin-left: 222px; }
.sheets { height: 25px; border-top: 1px solid #9b9b9b; display: flex; justify-content: space-between; }
.sheettab { width: 43px; height: 24px; margin-top: -1px; padding: 5px 0 0 4px; background: #fff; border-right: 1px solid #9b9b9b; border-radius: 0 0 4px 0; }
.zoom { display: flex; align-items: center; padding-right: 9px; }
.zoom i { width: 1px; height: 19px; background: #777; margin: 0 11px 0 6px; }
.zoom span { width: 33px; margin: 1px 14px 0 8px; letter-spacing: .3px; }
.zoom svg:last-child { margin-left: 12px; }

.line path, .thin path { fill: none; stroke: #133f78; stroke-width: 1.200; }
.thin path { stroke-width: 1; }
.box rect { fill: #d2dfff; stroke: #133f78; stroke-width: 1.200; }
.box .root { fill: #66a1e0; }
.selected { fill: none; stroke: #456abb; stroke-width: 4.200; }
.topic { font-family: "DejaVu Sans", "Noto Sans CJK SC", sans-serif; font-size: 13.200px; fill: #174680; }
.topic .c { font-size: 13.800px; letter-spacing: .87px; font-weight: 300; fill: #2c578f; font-family: "Noto Sans CJK SC", sans-serif; }
.topic.main { font-size: 17.600px; }
.topic .c2 { font-weight: 300; font-size: 18.500px; fill: #2c578f; }
.topic .rt { font-size: 23.700px; fill: #0d4382; }
.cursor { fill: #fff; stroke: #111; }

.side { flex: 1; margin-left: 4px; display: flex; flex-direction: column; gap: 3px; }
.panel { border: 1px solid #a0a0a0; border-radius: 3px 3px 0 0; display: flex; flex-direction: column; background: #f0f0f0; overflow: hidden; }
.outline { height: 312px; }
.props { flex: 1; }
.ptabs { height: 24px; flex: none; display: flex; }
.ptab { display: flex; align-items: center; gap: 4px; padding: 0 3px 2px 4px; border-right: 1px solid #a0a0a0; border-bottom: 1px solid #a0a0a0; }
.ptab.on { background: #fff; width: 72px; border-bottom: 0; padding: 0 3px 1px 3px; }
.ptab.on span { width: 28px; }
.ptab span { width: 25px; }
.ptools { flex: 1; display: flex; justify-content: flex-end; gap: 9px; padding: 3px 7px 0 0; border-bottom: 1px solid #a0a0a0; }
.hot { background: #c5e0f7; height: 20px; margin: -2px -5px 0 0; padding: 1px 2px; border: 1px solid #9ccbf2; }
.olbody { display: flex; height: 267px; padding: 0 3px 0 2px; background: #fff; }
.tree { width: 223px; overflow: hidden; padding-top: 1px; }
.row { height: 20px; display: flex; align-items: center; border-bottom: 1px solid #e3e3e3; padding-left: 5px; }
.row svg:nth-child(2) { margin-right: 5px; }
.row svg.t { margin: 0 6px 0 1px; }
.ex { width: 10px; margin-right: 7px; flex: none; }
.wide { letter-spacing: .25px; }
.l1 { padding-left: 24px; } .l2 { padding-left: 43px; } .l3 { padding-left: 62px; }
.l4 { padding-left: 81px; } .l5 { padding-left: 100px; } .l6 { padding-left: 119px; }
.olv { width: 16px; padding: 5px 0 3px; }
.olv i { width: 15px; height: 26px; margin-top: 2px; }
.olh { height: 18px; margin: 0 18px 0 2px; padding: 0 5px 0 3px; }
.olh i { width: 59px; height: 15px; margin-left: 4px; }

.props .ptabs { height: 22px; }
.props .ptab { padding-top: 1px; padding-bottom: 0; }
.ptitle { height: 20px; flex: none; padding: 3px 0 0 2px; border-bottom: 1px solid #a0a0a0; margin-right: 2px; background: #f0f0f0; letter-spacing: .15px; }
.pbody { flex: 1; display: flex; background: #fff; padding-right: 3px; overflow: hidden; }
.form { width: 226px; padding: 7px 6px 0 7px; }
.form h3 { margin: 0; height: 21px; padding: 2px 5px; font-size: 12px; line-height: 18px; color: #1474cf; background: linear-gradient(#dfe7f3, #fff); border: 1px solid #b9cbe2; border-bottom: 0; border-radius: 3px 3px 0 0; }
.frow { display: flex; align-items: center; padding-left: 12px; }
.sp { margin-left: auto; margin-right: 12px; }
.r1 { height: 65px; padding: 0 0 25px 16px; }
.r1 span { margin-left: 6px; }
.r2 { height: 41px; }
.r3 { height: 38px; padding-top: 2px; }
.r3 .sp { margin-right: 10px; }
.script { font: italic 19px/20px "DejaVu Serif", "DejaVu Sans", serif; width: 28px; }
.r4 { height: 32px; padding-bottom: 12px; }
.size { width: 46px; }
.fb { font: bold 13px/14px "DejaVu Serif", serif; margin-left: 12px; width: 25px; }
.fi { font: italic bold 14px/14px "Liberation Serif", serif; width: 17px; }
.fs { font: 9px/12px "Liberation Sans", sans-serif; width: 24px; letter-spacing: -.8px; }
.swatch { width: 16px; height: 16px; background: #003f87; border: 1px solid #234; }
.al { margin: 0 8px 0 8px; }
.prv { width: 16px; padding: 5px 0 4px; }
.prv i { width: 15px; height: 107px; margin-top: 3px; }

.status { height: 31px; flex: none; display: flex; align-items: center; padding-left: 5px; }
.sttext { width: 989px; letter-spacing: .15px; }
.autosave { width: 84px; height: 26px; border-left: 1px solid #a0a0a0; padding: 5px 0 0 5px; letter-spacing: -.75px; }
.ime { margin-left: 80px; width: 205px; height: 23px; margin-top: 8px; background: #fff; border: 1px solid #d2d2d2; display: flex; align-items: center; gap: 6px; }
.sogou { margin-left: -5px; margin-top: -3px; }
.ime b { color: #1c6dc9; font-size: 15px; width: 16px; }

.taskbar { height: 40px; flex: none; display: flex; background: linear-gradient(90deg, #12232b, #16252a 25%, #161d22 45%, #121418 75%, #0f1114); color: #fff; }
.tb { width: 49px; display: flex; align-items: center; justify-content: center; border-bottom: 2px solid transparent; }
.tb:first-child { width: 48px; }
.run { border-style: solid; border-width: 0 0 2px; border-image: linear-gradient(90deg, transparent 9%, #76b5eb 9% 91%, transparent 91%) 2; }
.active { background: #465156; border-image: linear-gradient(#76b5eb, #76b5eb) 2; }
.tray { flex: 1; display: flex; align-items: center; justify-content: flex-end; gap: 8px; padding-right: 25px; }
.a1 { margin-right: 5px; }
.zh { font-size: 13px; width: 15px; margin-left: 1px; }
.clock { width: 68px; margin-left: -4px; display: flex; flex-direction: column; align-items: center; font: 12px/19px "Noto Sans", sans-serif; letter-spacing: .15px; }
.note { margin-left: 6px; }
```
